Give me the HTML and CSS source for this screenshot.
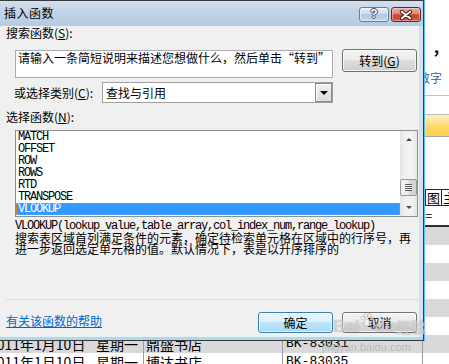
FILE: index.html
```html
<!DOCTYPE html>
<html lang="zh-CN">
<head>
<meta charset="utf-8">
<title>插入函数</title>
<link rel="stylesheet" href="styles.css">
</head>
<body>
<div class="screen">
  <div class="sheet">
    <div class="ribbon">
      <span class="comma">，</span>
      <span class="group-label">数字</span>
    </div>
    <div class="formula"></div>
    <div class="colhead"></div>
    <div class="blank"></div>
    <div class="cells-row"><span class="cell cell-sel">图</span><span class="cell">主</span></div>
    <div class="eq-row">=</div>
    <div class="thick"></div>
    <div class="trow shade"></div>
    <div class="trow"></div>
    <div class="trow shade"></div>
    <div class="trow"></div>
    <div class="trow shade"></div>
    <div class="trow"></div>
    <div class="trow shade"><span class="c1">2011年1月10日</span><span class="c2">星期一</span><span class="c3">鼎盛书店</span><span class="c4 code">BK-83031</span><span class="c5"></span></div>
    <div class="trow"><span class="c1">2011年1月10日</span><span class="c2">星期一</span><span class="c3">博达书店</span><span class="c4 code">BK-83035</span><span class="c5"></span></div>
  </div>

  <div class="dialog">
    <div class="titlebar">
      <span class="title">插入函数</span>
      <span class="tbtn tb-help">?</span>
      <span class="tbtn tb-close">
        <svg width="30" height="14" viewBox="0 0 30 14">
          <path d="M10.5 3.5 L19.5 10.5 M19.5 3.5 L10.5 10.5" stroke="#3a1a16" stroke-width="4.2" stroke-linecap="round"/>
          <path d="M10.5 3.5 L19.5 10.5 M19.5 3.5 L10.5 10.5" stroke="#ffffff" stroke-width="2.2" stroke-linecap="round"/>
        </svg>
      </span>
    </div>
    <div class="frame">
      <div class="client">
        <div class="label l-search">搜索函数(<u>S</u>):</div>
        <div class="search-row">
          <div class="textbox">请输入一条简短说明来描述您想做什么，然后单击“转到”</div>
          <div class="btn btn-go">转到(<u>G</u>)</div>
        </div>
        <div class="cat-row">
          <span class="label cat-label">或选择类别(<u>C</u>):</span>
          <div class="combo">
            <span class="combo-text">查找与引用</span>
            <span class="combo-btn"><i class="tri tri-down"></i></span>
          </div>
        </div>
        <div class="label l-func">选择函数(<u>N</u>):</div>
        <div class="listbox">
          <ul class="items">
            <li>MATCH</li>
            <li>OFFSET</li>
            <li>ROW</li>
            <li>ROWS</li>
            <li>RTD</li>
            <li>TRANSPOSE</li>
            <li class="selected">VLOOKUP</li>
          </ul>
          <div class="scrollbar">
            <span class="sb-btn"><i class="tri tri-up small"></i></span>
            <span class="sb-track"><span class="sb-thumb"><i class="grip"></i></span></span>
            <span class="sb-btn"><i class="tri tri-down small"></i></span>
          </div>
        </div>
        <div class="signature">VLOOKUP(lookup_value,table_array,col_index_num,range_lookup)</div>
        <p class="desc">搜索表区域首列满足条件的元素，确定待检索单元格在区域中的行序号，再<br>进一步返回选定单元格的值。默认情况下，表是以升序排序的</p>
        <div class="footer">
          <div class="sep"></div>
          <div class="footer-row">
            <a class="help">有关该函数的帮助</a>
            <div class="btn btn-ok">确定</div>
            <div class="btn btn-cancel">取消</div>
          </div>
        </div>
      </div>
      <div class="frame-right"></div>
    </div>
  </div>

  <div class="wm">
    <span class="wm-bai">Bai</span>
    <svg class="paw" width="14" height="14" viewBox="0 0 14 14">
      <g fill="rgba(255,255,255,0.6)" stroke="rgba(120,120,120,0.45)" stroke-width="0.8">
        <ellipse cx="3" cy="5" rx="1.6" ry="2"/>
        <ellipse cx="6" cy="2.5" rx="1.6" ry="2"/>
        <ellipse cx="9.5" cy="2.5" rx="1.6" ry="2"/>
        <ellipse cx="12" cy="5.5" rx="1.5" ry="1.9"/>
        <path d="M7.5 6.5 C10 6.5 12 10 11 12 C10 13.5 5 13.5 4 12 C3 10 5 6.5 7.5 6.5 Z"/>
      </g>
    </svg>
    <span class="wm-du">du</span><span class="wm-jy">经验</span>
  </div>
  <div class="wm-url">jingyan.baidu.com</div>
</div>
</body>
</html>
```

FILE: styles.css
```css
* { box-sizing: border-box; margin: 0; padding: 0; }
html, body { width: 449px; height: 364px; overflow: hidden; background: #fff; }
body { font-family: "Noto Sans CJK SC", "Noto Sans", sans-serif; font-size: 12px; color: #000; }
ul { list-style: none; }
u { text-decoration: underline; }

.screen { position: relative; width: 449px; height: 364px; overflow: hidden; }

/* ---------- background spreadsheet ---------- */
.sheet { display: flex; flex-direction: column; width: 449px; height: 364px; background: #fff; }
.sheet > * { flex: none; }
.ribbon { height: 96px; border-bottom: 1px solid #c4c4c4; padding: 38px 0 0 418px; display: flex; flex-direction: column; }
.comma { margin-left: 14px; font-size: 16px; line-height: 18px; font-weight: bold; }
.group-label { margin-top: 15px; line-height: 14px; color: #3e5f8e; font-size: 12px; }
.formula { height: 19px; border-bottom: 1px solid #bdbdbd; }
.colhead { height: 22px; background: linear-gradient(#fff2c2, #ffd766 60%, #ffcf52); border-bottom: 1px solid #a8a8a8; }
.blank { height: 52px; }
.cells-row { height: 17px; display: flex; padding-left: 425px; border-top: 1px solid #222; border-bottom: 1px solid #222; font-size: 13px; line-height: 15px; }
.cell { padding: 0 1px; }
.cell-sel { border-left: 1px solid #222; border-right: 1px solid #222; }
.eq-row { height: 19px; padding: 1px 0 0 425px; font-size: 13px; line-height: 18px; }
.thick { height: 2px; background: #2f2f2f; }
.trow { height: 18px; display: grid; grid-template-columns: 106px 52px 139px 140px 1fr; margin-left: -14px; width: 477px; font-size: 14px; line-height: 18px; white-space: nowrap; }
.trow.shade { background: #d9d9d9; }
.trow span { overflow: hidden; }
.c1 { padding-left: 3px; }
.c2 { padding-left: 4px; border-right: 1px solid #9d9d9d; }
.c3 { padding-left: 2px; border-right: 1px solid #9d9d9d; }
.c4 { padding-left: 3px; border-right: 1px solid #9d9d9d; }
.code { font-family: "Liberation Mono", monospace; font-size: 13px; }

/* ---------- dialog ---------- */
.dialog { position: absolute; left: 0; top: 0; width: 424px; height: 341px; border: 1px solid #3a3a3a; border-left: 0; background: #cddcec; display: flex; flex-direction: column; box-shadow: 1px 0 0 #55c3ee; }
.titlebar { height: 25px; flex: none; display: flex; align-items: flex-start; padding: 0 2px 0 4px; background: linear-gradient(#d2dfee, #bfd1e6 55%, #b6cae2); }
.title { flex: 1; font-size: 12px; line-height: 24px; letter-spacing: 0.5px; }
.tbtn { margin-top: 6px; width: 30px; height: 15px; border-radius: 3px; display: flex; align-items: center; justify-content: center; }
.tb-help { border: 1px solid #6a7c94; background: linear-gradient(#e6eef8, #cddcee 45%, #b3c9e3 50%, #c2d6ec); box-shadow: inset 0 0 0 1px rgba(255,255,255,0.55); font-family: "Liberation Sans", sans-serif; font-weight: bold; font-size: 12px; line-height: 13px; color: #fff; text-shadow: 1px 0 #3c4a5e, -1px 0 #3c4a5e, 0 1px #3c4a5e, 0 -1px #3c4a5e; }
.tb-close { margin-left: 2px; border: 1px solid #5f2a24; background: linear-gradient(#eab0a5, #de8677 45%, #c74434 52%, #d15a45); box-shadow: inset 0 0 0 1px rgba(255,220,210,0.5); }
.tb-close svg { display: block; }

.frame { flex: 1; display: flex; border-bottom: 3px solid #a7dbf2; }
.client { width: 419px; height: 311px; background: #f0f0f0; display: flex; flex-direction: column; }
.frame-right { flex: 1; background: #d3e1ef; }

.label { line-height: 14px; height: 14px; white-space: nowrap; }
.l-search { margin-left: 6px; }
.search-row { display: flex; align-items: flex-start; margin: 10px 2px 0 15px; }
.textbox { width: 318px; height: 28px; border: 1px solid #a9abb0; background: #fff; padding: 0 2px; line-height: 14px; white-space: nowrap; overflow: hidden; }
.btn { height: 23px; width: 75px; border: 1px solid #707070; border-radius: 3px; background: linear-gradient(#f2f2f2, #ebebeb 50%, #dddddd 50%, #cfcfcf); box-shadow: inset 0 0 0 1px rgba(255,255,255,0.75); display: flex; align-items: center; justify-content: center; line-height: 14px; }
.btn-go { margin: -1px 0 0 9px; }

.cat-row { display: flex; align-items: center; margin: 4px 0 0 14px; height: 21px; }
.cat-label { width: 88px; }
.combo { width: 231px; height: 21px; border: 1px solid #a0a0a0; background: #fff; display: flex; }
.combo-text { flex: 1; padding-left: 3px; line-height: 19px; }
.combo-btn { width: 17px; height: 19px; border: 1px solid #8a8a8a; background: linear-gradient(#f1f1f1, #dcdcdc); box-shadow: inset 1px 1px 0 #fff; display: flex; align-items: center; justify-content: center; }
.tri { display: block; width: 0; height: 0; border-left: 4px solid transparent; border-right: 4px solid transparent; }
.tri-down { border-top: 4px solid #000; }
.tri-up { border-bottom: 4px solid #000; }
.tri.small { border-left-width: 3.5px; border-right-width: 3.5px; }
.tri-down.small { border-top: 3px solid #4a4a4a; }
.tri-up.small { border-bottom: 3px solid #4a4a4a; }

.l-func { margin: 7px 0 0 6px; }
.listbox { margin: 6px 0 0 15px; width: 403px; height: 87px; border: 1px solid #8e8f8f; background: #fff; display: flex; }
.items { flex: 1; font-family: "Liberation Mono", monospace; font-size: 12px; letter-spacing: -1.2px; }
.items li { height: 12px; line-height: 12px; padding-left: 2px; white-space: nowrap; }
.items li.selected { background: #3399ff; color: #fff; outline: 1px dotted #d88a2c; outline-offset: -1px; }
.scrollbar { width: 17px; display: flex; flex-direction: column; background: linear-gradient(90deg, #e3e3e3, #f2f2f2 30%, #f2f2f2 70%, #e6e6e6); }
.sb-btn { height: 17px; flex: none; display: flex; align-items: center; justify-content: center; }
.sb-track { flex: 1; display: flex; flex-direction: column; }
.sb-thumb { margin-top: 31px; height: 17px; border: 1px solid #9a9a9a; border-radius: 2px; background: linear-gradient(90deg, #f4f4f4, #e9e9e9 50%, #dadada 50%, #d3d3d3); display: flex; align-items: center; justify-content: center; }
.grip { display: block; width: 7px; height: 7px; background: repeating-linear-gradient(#5a5a5a 0 1px, #f4f4f4 1px 2px); }

.signature { margin: 3px 0 0 15px; height: 12px; line-height: 12px; font-family: "Liberation Mono", monospace; font-size: 12px; letter-spacing: -1.2px; white-space: nowrap; }
.desc { margin: 0 0 0 15px; line-height: 11px; font-size: 12px; white-space: nowrap; }

.footer { margin-top: auto; padding-bottom: 4px; }
.sep { margin-left: 6px; height: 1px; background: #d6dee6; }
.footer-row { margin-top: 12px; display: flex; align-items: center; padding: 0 2px 0 6px; height: 21px; }
.help { color: #0066cc; text-decoration: underline; line-height: 14px; margin-top: -3px; }
.btn-ok { margin-left: auto; height: 21px; border-color: #3c7fb1; background: linear-gradient(#eaf6fd, #d9f0fc 50%, #bee6fd 50%, #a7d9f5); box-shadow: inset 0 0 0 1px rgba(255,255,255,0.6); }
.btn-cancel { margin-left: 9px; height: 21px; }

/* ---------- watermark overlay ---------- */
.wm { position: absolute; left: 333px; top: 313px; display: flex; align-items: flex-end; font-family: "Liberation Sans", sans-serif; font-weight: bold; font-size: 17px; line-height: 20px; color: rgba(255,255,255,0.55); text-shadow: 0 0 1px rgba(90,90,90,0.55); white-space: nowrap; }
.paw { margin: 0 0 10px 1px; }
.wm-jy { font-family: "Noto Sans CJK SC", sans-serif; font-size: 15px; margin-left: 1px; }
.wm-url { position: absolute; left: 322px; top: 341px; font-family: "Liberation Sans", sans-serif; font-size: 11px; line-height: 12px; color: rgba(175,175,175,0.8); }
```
